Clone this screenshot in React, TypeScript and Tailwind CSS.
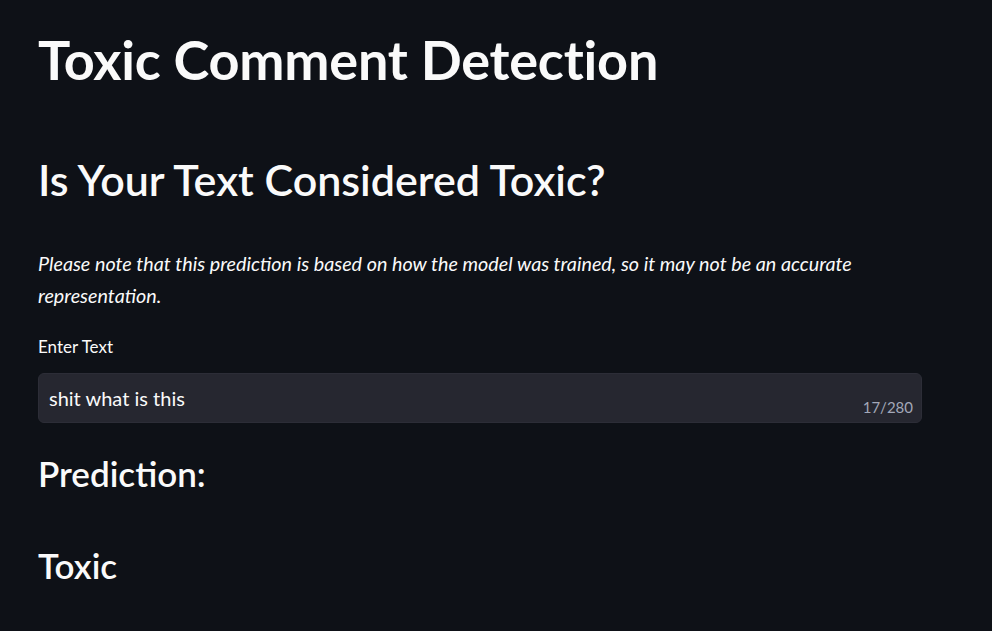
import React from 'react';

const App: React.FC = () => {
  const text = 'shit what is this';

  return (
    <div className="min-h-screen w-full bg-[#0e1117] text-[#fafafa] font-['Lato','Liberation_Sans',sans-serif]">
      <div className="px-[38px] pt-[28px] w-[960px]">
        {/* Title */}
        <h1 className="text-[54px] font-bold leading-[1.2] tracking-[-0.2px]">Toxic Comment Detection</h1>

        {/* Subheader */}
        <h2 className="mt-[61px] text-[43px] font-semibold leading-[1.2]">Is Your Text Considered Toxic?</h2>

        <p className="mt-[43px] text-[19.75px] italic leading-[32px]">
          Please note that this prediction is based on how the model was trained, so it may not be an accurate representation.
        </p>

        {/* Text input */}
        <div className="mt-[24px]">
          <label className="block text-[17px] leading-[22px] mb-[15px]">Enter Text</label>
          <div className="relative h-[50px] rounded-[6px] border border-[#2c2d37] bg-[#262730] flex items-center px-[10px]">
            <span className="text-[20px]">{text}</span>
            <span className="absolute right-[8px] bottom-[4px] text-[15px] text-[#a3a8b8]">{text.length}/280</span>
          </div>
        </div>

        {/* Prediction */}
        <h3 className="mt-[29px] text-[35px] font-semibold leading-[1.2]">Prediction:</h3>
        <h3 className="mt-[50px] text-[35px] font-semibold leading-[1.2]">Toxic</h3>
      </div>
    </div>
  );
};

export default App;
